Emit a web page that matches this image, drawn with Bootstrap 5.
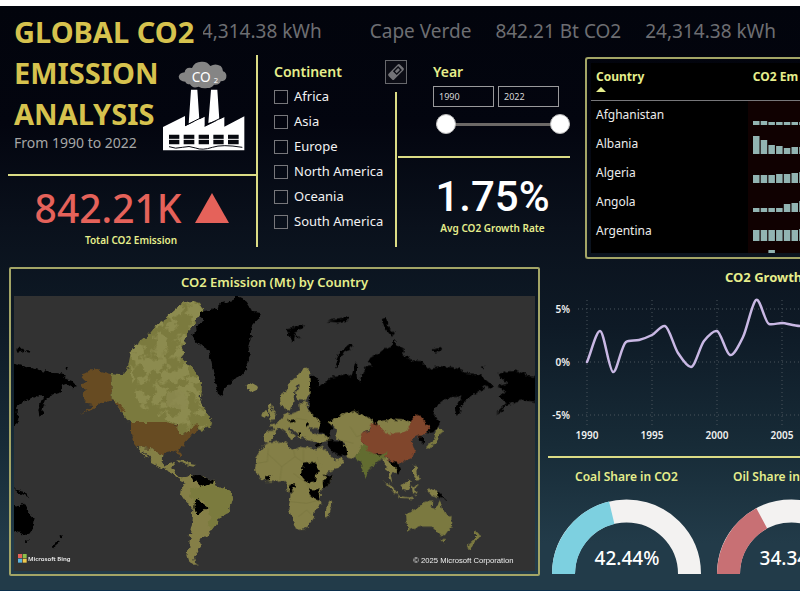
<!DOCTYPE html>
<html lang="en">
<head>
<meta charset="utf-8">
<meta name="viewport" content="width=device-width, initial-scale=1">
<title>Global CO2 Emission Analysis</title>
<link href="https://cdn.jsdelivr.net/npm/bootstrap@5.3.0/dist/css/bootstrap.min.css" rel="stylesheet">
<style>
  :root { --lime: #e6ee8c; --line: #dbdc85; --frame: #a3a566; }
  body { font-family: "Noto Sans", "Open Sans", sans-serif; background: #fff; color: #fff; font-size: 13px; line-height: 20px; overflow-x: hidden; }
  .dash { margin-top: 6px; padding-bottom: 14px; overflow: hidden; border-bottom: 1px solid #0b2f4c;
    background: linear-gradient(#02040c 0, #03050f 20%, #0a111c 38%, #0e1a26 55%, #172b37 75%, #223b49 92%, #223b49 100%); }
  .top-row { display: grid; grid-template-columns: 256fr 544fr; height: 253px; }
  .filters-row { display: grid; grid-template-columns: 314fr 230fr; }
  .bottom-row { display: grid; grid-template-columns: 531fr 252fr; column-gap: 8px; padding-left: 9px; margin-top: 8px; }
  .bottom-row > *, .top-row > *, .filters-row > * { min-width: 0; }
  .brand-block { padding: 5px 0 0 14px; height: 168px; }
  h1 { font-size: 29px; line-height: 41px; font-weight: 700; color: #d6c24e; margin: 0; flex: 1 1 0; min-width: 0; white-space: nowrap; }
  .factory { flex: none; margin: 50px 11px -17px 0; }
  .period { font-size: 14px; line-height: 18px; color: #a6a6a6; }
  .rule-h { height: 2px; background: var(--line); border: 0; opacity: 1; margin: 0; }
  .rule-v { width: 2px; background: var(--line); }
  .kpi { font-size: 39px; line-height: 48px; color: #e5625a; gap: 14px; font-weight: 500; padding-left: 8px; }
  .kpi-label { font-size: 10px; line-height: 16px; color: var(--lime); font-weight: 600; padding-left: 6px; }
  .ticker { height: 49px; margin-left: -53px; font-size: 19px; color: #6d6e72; padding-right: 24px; white-space: nowrap; }
  .ticker span { flex: none; }
  .heading { font-size: 14px; line-height: 20px; font-weight: 600; color: var(--lime); margin: 0; }
  .filter-panel { height: 192px; display: grid; grid-template-columns: 129fr 22px 163fr; }
  .filter-panel > * { min-width: 0; }
  .continents { padding: 7px 0 0 16px; border-left: 2px solid var(--line); }
  .continents label { line-height: 25px; height: 25px; white-space: nowrap; color: #f2f2f2; }
  .continents input { appearance: none; width: 14px; height: 14px; border: 1px solid #77777b; background: transparent; margin: 0 6px 0 0; flex: none; }
  .continents input:checked { background: var(--lime); }
  .checks { padding-top: 2px; }
  .divider-col { padding-top: 5px; }
  .clear-btn { width: 22px; height: 24px; padding: 0; border: 1px solid #67686c; background: #0b0c14; }
  .year-panel { padding-top: 7px; }
  .year-body { padding: 0 0 0 26px; }
  .year-box { width: 61px; height: 21px; font-size: 9px; line-height: 12px; color: #d8d8d8; background: transparent; border: 1px solid #99999b; padding: 0 5px; }
  .slider-pair { display: grid; margin-left: 29px; height: 22px; margin-top: 6px; }
  .slider-pair input { grid-area: 1 / 1; appearance: none; width: 100%; height: 22px; margin: 0; background: transparent; pointer-events: none; }
  .slider-pair input::-webkit-slider-runnable-track { height: 3px; background: transparent; }
  .slider-pair input:first-child::-webkit-slider-runnable-track { background: #6b6866; }
  .slider-pair input::-webkit-slider-thumb { appearance: none; width: 20px; height: 20px; border-radius: 50%; background: #fff; border: 1px solid #bbb; margin-top: -9px; pointer-events: auto; }
  .year-rule { margin: 21px 0 0 -9px; }
  .rate { font-family: Roboto, "Liberation Sans", sans-serif; font-size: 42px; line-height: 46px; font-weight: 500; }
  .table-frame { margin-left: 15px; margin-top: 2px; height: 202px; padding: 4px 0 4px 4px; border: 2px solid var(--frame); border-right: 0; border-radius: 3px 0 0 3px; overflow: hidden; }
  .table-view { height: 100%; overflow: hidden; background: #000; }
  .country-grid { table-layout: fixed; width: 100%; border-collapse: collapse; color: #ececec; font-size: 12px; }
  .country-grid th { height: 37px; vertical-align: top; padding: 4px 0 0 5px; color: var(--lime); font-weight: 700; border-bottom: 1px solid #77777a; white-space: nowrap; line-height: 20px; }
  .country-grid td { height: 29px; padding: 0 0 0 5px; line-height: 28px; }
  .country-grid td:last-child { background: #100101; }
  .country-grid svg { display: block; }
  .country-col { width: 75%; }
  .sort-mark { width: 0; border: 5px solid transparent; border-top: 0; border-bottom-color: var(--lime); }
  .map-frame { border: 2px solid var(--frame); border-radius: 2px; padding: 0 3px 3px; }
  .map-title { font-size: 13px; line-height: 27px; font-weight: 600; color: var(--lime); margin: 0; text-align: center; }
  .map-svg { display: block; width: 100%; height: auto; background: #323232; }
  .chart-title { font-size: 13px; line-height: 20px; font-weight: 700; color: var(--lime); margin: 0; padding-left: 177px; white-space: nowrap; }
  .chart-svg { display: block; width: 100%; height: auto; }
  .chart-svg text { font-size: 10px; font-weight: 600; fill: #f0f0f0; }
  .gauges { gap: 16px; padding: 9px 0 0 4px; overflow: hidden; }
  .gauge { width: 149px; flex: none; text-align: center; }
  .gauge h2 { font-size: 12px; line-height: 20px; font-weight: 600; color: var(--lime); margin: 0 0 12px; white-space: nowrap; }
  .gauge svg { display: block; }
  .gauge text { font-size: 19px; font-weight: 500; fill: #fff; }
</style>
<script src="https://cdn.jsdelivr.net/npm/bootstrap@5.3.0/dist/js/bootstrap.bundle.min.js"></script>
</head>
<body>
<main class="dash">
  <div class="top-row">
    <section>
      <div class="brand-block">
        <div class="d-flex align-items-start">
          <h1>GLOBAL CO2<br>EMISSION<br>ANALYSIS</h1>
          <svg class="factory" width="82" height="90" viewBox="0 0 246 270" aria-hidden="true">
            <g transform="translate(-490 -184)">
              <path fill="#858585" d="M537 231q3-12 18-13 2-17 22-13 8-20 30-19 16-1 25 13 15-9 31 0 7 6 7 16 12 4 10 18-2 12-17 12-3 12-20 10-7 10-20 10-14 3-26-4-18 7-26-7-11 0-14-8-18-1-20-15z"/>
              <text x="576" y="246" font-size="41" fill="#fff">CO</text><text x="642" y="249" font-size="23" fill="#fff">2</text>
              <path fill="#fff" d="M574 270h19l6 90-32 12zM634 270h19l6 90-33 10zM490 382l66-33v31l59-29v30l59-29v29l60-31v102H490z"/>
              <path stroke="#05070f" stroke-width="3" fill="none" d="M556 378l59-29M615 379l59-29M508 441q20 8 40 2t40 2 50-2 90 0"/>
              <g fill="#07090f"><path d="M508 405h31v29h-31zM552 405h32v29h-32zM597 405h31v29h-31zM641 405h31v29h-31zM685 405h32v29h-32z"/></g>
              <path stroke="#fff" stroke-width="3" d="M505 419H720"/>
            </g>
          </svg>
        </div>
        <div class="period">From 1990 to 2022</div>
      </div>
      <hr class="rule-h ms-2">
      <div class="text-center pt-2">
        <div class="kpi d-flex justify-content-center align-items-center"><span>842.21K</span>
          <svg width="34" height="30" viewBox="0 0 34 30" aria-hidden="true"><path fill="#e5625a" d="M17 0 34 30H0z"/></svg></div>
        <div class="kpi-label">Total CO2 Emission</div>
      </div>
    </section>

    <section>
      <div class="ticker d-flex align-items-center justify-content-end overflow-hidden">
        <span class="me-5">24,314.38 kWh</span><span class="me-4">Cape Verde</span><span class="me-4">842.21 Bt CO2</span><span>24,314.38 kWh</span>
      </div>
      <div class="filters-row">
        <div class="filter-panel">
          <div class="continents">
            <fieldset>
              <legend class="heading">Continent</legend>
              <div class="checks d-flex flex-column">
                <label class="d-flex align-items-center"><input type="checkbox">Africa</label>
                <label class="d-flex align-items-center"><input type="checkbox">Asia</label>
                <label class="d-flex align-items-center"><input type="checkbox">Europe</label>
                <label class="d-flex align-items-center"><input type="checkbox">North America</label>
                <label class="d-flex align-items-center"><input type="checkbox">Oceania</label>
                <label class="d-flex align-items-center"><input type="checkbox">South America</label>
              </div>
            </fieldset>
          </div>
          <div class="divider-col d-flex flex-column align-items-center">
            <button type="button" class="clear-btn d-flex align-items-center justify-content-center" aria-label="Clear selections">
              <svg width="18" height="18" viewBox="0 0 18 18" aria-hidden="true"><g transform="rotate(-45 9 9)"><rect x="1" y="5" width="16" height="8" rx="1.5" fill="#737377"/><rect x="8" y="7" width="6" height="4" fill="none" stroke="#0b0c14" stroke-width="1.4"/></g></svg>
            </button>
            <div class="rule-v flex-grow-1 mt-2"></div>
          </div>
          <div class="year-panel">
            <div class="year-body">
              <h2 class="heading">Year</h2>
              <div class="d-flex gap-1 mt-1">
                <input class="year-box" type="text" value="1990" aria-label="From year">
                <input class="year-box" type="text" value="2022" aria-label="To year">
              </div>
            </div>
            <div class="slider-pair">
              <input type="range" min="1990" max="2022" value="1990" aria-label="First year">
              <input type="range" min="1990" max="2022" value="2022" aria-label="Last year">
            </div>
            <hr class="rule-h year-rule">
            <div class="text-center ps-2 pt-3">
              <div class="rate">1.75%</div>
              <div class="kpi-label text-nowrap ps-0">Avg CO2 Growth Rate</div>
            </div>
          </div>
        </div>

        <div class="table-frame">
          <div class="table-view">
            <table class="country-grid">
              <thead><tr><th class="country-col">Country<div class="sort-mark"></div></th><th>CO2 Em</th></tr></thead>
              <tbody id="rows"></tbody>
            </table>
          </div>
        </div>
      </div>
    </section>
  </div>

  <div class="bottom-row">
    <section class="map-frame">
      <h2 class="map-title">CO2 Emission (Mt) by Country</h2>
      <svg class="map-svg" viewBox="42 108 1563 825" role="img" aria-label="World map of CO2 emission">
        <defs>
          <filter id="coast" x="-5%" y="-5%" width="110%" height="110%" color-interpolation-filters="sRGB"><feTurbulence type="fractalNoise" baseFrequency=".06" numOctaves="3" seed="4"/><feDisplacementMap in="SourceGraphic" scale="18" xChannelSelector="R" yChannelSelector="G"/></filter>
          <filter id="relief" x="0" y="0" width="100%" height="100%" color-interpolation-filters="sRGB"><feTurbulence type="fractalNoise" baseFrequency=".03" numOctaves="3" seed="9"/><feColorMatrix values="0 0 0 0 .55  0 0 0 0 .545  0 0 0 0 .31  9 0 0 0 -4"/><feComposite in2="SourceGraphic" operator="in"/></filter>
        </defs>
        <g filter="url(#coast)">
          <g fill="#000">
            <path d="M42 312 60 316 80 322 100 325 125 332 150 338 175 340 190 345 200 358 215 362 230 378 215 382 200 372 185 378 190 392 170 398 155 405 140 415 130 440 125 465 118 470 115 450 122 430 130 410 110 405 95 412 80 420 65 428 52 438 50 460 58 480 30 505 30 310zM48 266l22 0 4 8-22 4zM82 270l12 2-2 6-10-2zM196 320l8 2-4 6z"/>
            <path d="M600 155 615 152 630 150 640 145 655 148 660 130 680 125 700 120 710 108 725 115 740 125 750 140 755 155 780 160 772 180 755 200 752 230 745 260 752 285 740 310 742 325 725 345 705 355 690 370 675 385 665 410 655 405 645 370 640 340 635 310 625 270 610 260 580 235 572 228 590 215 588 195 610 185 600 175z"/>
          </g>
          <path fill="#7b7a3e" d="M334 342 360 345 378 338 385 315 392 280 405 258 430 240 450 220 470 195 485 182 492 188 500 170 525 148 550 128 580 124 600 128 610 148 600 165 590 180 580 200 565 210 560 235 545 262 552 280 545 295 560 310 580 325 590 345 606 370 605 395 600 420 612 445 630 465 628 480 640 492 628 500 605 512 580 505 560 520 540 525 530 495 393 490 380 478 365 458 345 425 334 418z"/>
          <path filter="url(#relief)" d="M390 345 392 280 405 258 430 240 450 220 470 195 485 182 492 188 500 170 525 148 550 128 580 124 600 128 610 148 600 165 590 180 580 200 565 210 560 235 545 262 552 280 545 295 560 310 580 325 590 345 606 370 605 395 600 420 612 445 630 465 628 480 605 505 560 510 500 480 420 440z"/>
          <path fill="#8c8950" opacity=".8" d="M500 400l25-10 30 10 8 25-10 25-35-5-20-20z"/>
          <path fill="#674b22" d="M245 352 255 338 280 325 300 333 334 342 334 418 345 425 358 428 372 450 365 455 350 435 335 420 310 422 295 428 290 440 270 450 245 466 268 445 278 432 262 428 250 412 245 400 262 390 243 380 245 372 262 368 250 358z"/>
          <path fill="#8a864c" d="M740 378 760 370 775 378 772 388 755 395 742 388z"/>
          <g transform="translate(0 480)">
            <path fill="#674b22" d="M393 6 500 6 520 12 535 22 538 42 552 42 570 32 585 15 592 22 585 38 575 45 565 60 552 75 535 88 545 105 540 112 532 95 515 93 500 96 487 108 475 98 455 88 430 84 412 80 400 65 393 45z"/>
            <path fill="#847f45" d="M412 80 430 84 455 88 475 98 487 108 485 125 495 138 508 132 522 128 518 140 510 145 525 152 530 165 545 172 560 170 562 176 548 182 530 172 515 158 495 148 478 142 462 132 455 118 440 102 432 90 427 90 444 114 438 118 418 86zM530 121 550 122 570 132 587 135 580 140 560 136 545 128 530 126z"/>
            <path fill="#857f47" d="M548 178 562 170 575 162 590 168 615 172 640 182 655 200 690 215 702 228 692 250 685 275 660 292 650 310 635 330 622 335 625 345 608 352 600 365 602 375 590 388 592 398 582 410 585 425 597 433 580 434 568 425 562 405 568 380 570 340 578 300 580 265 560 250 543 225 545 205 553 190z"/>
            <path fill="#7b7b3e" d="M575 205 600 200 640 190 655 200 690 215 702 228 692 250 685 275 660 292 650 310 635 328 620 315 632 292 622 262 605 240 585 242 570 230z"/>
            <path fill="#000" d="M572 166 600 165 610 172 630 178 642 185 638 195 618 192 600 200 590 190 580 182zM585 242 595 238 605 250 622 262 612 272 600 282 588 282 583 262zM30 255 60 262 68 248 78 265 88 280 104 300 100 325 85 345 65 342 30 328zM42 208 70 215 85 234 70 228 55 222zM155 378 175 360 179 368 160 384zM178 343 191 348 182 360zM78 360l8 0-4 8z"/>
          </g>
          <g transform="translate(720 0)">
            <path fill="#000" d="M208 345 225 350 240 362 240 375 225 378 245 375 275 350 320 342 335 350 345 305 352 312 350 350 358 368 368 335 380 320 395 318 385 300 410 285 430 268 450 262 460 240 470 252 495 268 490 285 510 298 545 305 560 325 600 318 640 322 680 338 720 345 740 362 760 378 750 385 725 375 735 390 705 400 690 410 668 430 660 455 650 468 645 448 665 410 630 412 605 425 585 440 578 460 590 470 600 490 585 515 565 520 530 495 460 495 400 500 320 500 275 500 270 535 255 528 240 515 235 480 215 462 205 445 210 420zM285 310 300 275 338 250 341 258 312 278 298 305 290 325zM140 205 165 200 180 192 195 200 182 210 165 215 185 238 165 225 160 250 150 230zM425 178 437 172 445 200 465 220 455 230 435 205zM578 268l22-4 4 8-22 6zM262 184l12-4 50-6 0 8-30 6zM725 320l8 0-2 8z"/>
            <path fill="#000" d="M775 345 800 335 830 332 860 345 900 355 900 428 850 420 830 425 800 435 780 455 765 462 800 428 775 405 800 395 772 380 800 370z"/>
            <path fill="#868248" d="M83 432 93 426 95 448 110 465 105 478 88 480 88 460zM66 466 78 452 85 463 75 475zM120 405 135 395 150 368 175 342 195 326 208 330 208 355 212 400 200 420 178 418 165 400 180 378 175 375 163 395 160 425 152 450 140 455 132 440 122 430z"/>
          </g>
          <g transform="translate(720 480)" fill="#847f47">
            <path d="M90 10 120 5 128-12 145-18 180-28 178-50 198-56 205-30 228-8 242 10 235 25 215 22 205 30 225 42 260 48 272 60 245 66 205 62 190 52 180 62 170 40 150 22 140 25 165 48 155 58 135 35 120 25 105 30 100 55 85 70 72 62 75 35 100 32 95 20z"/>
            <path d="M75 72 115 65 140 66 138 78 165 88 180 80 228 88 232 110 250 145 262 165 278 165 270 185 245 210 240 235 245 250 225 270 222 290 205 318 190 328 168 330 158 300 145 265 150 240 152 220 138 205 140 190 130 180 100 185 75 185 58 172 45 150 50 110 65 85zM255 268 272 245 277 252 265 290 255 292z"/>
            <path d="M222 90 245 82 262 95 285 120 300 115 312 125 300 142 255 160 240 130zM265 5 290-5 320-22 350-28 385-5 405 8 400 12 365 45 370 75 355 95 345 115 318 108 315 70 298 60 285 45 288 25zM410 5 450-2 500 2 520 12 500 40 450 45 420 30z"/>
            <path d="M430 105 445 122 470 140 475 158 455 160 460 190 450 180 440 140 428 125zM430 180 460 203 477 225 462 220zM475 224 522 232 520 238 475 231zM485 195 510 178 514 195 500 215 483 208zM516 198 534 196 522 208 532 222 518 220zM519 138 531 138 529 160 544 178 532 182 519 165zM562 208 594 212 594 232 575 225z"/>
            <path fill="#7b7940" d="M498 280 530 265 555 245 580 245 578 262 590 268 598 240 608 270 635 295 633 320 615 345 600 345 575 320 545 320 505 332 500 310zM604 356 619 358 612 371zM705 332 724 345 708 365 690 387 680 380 705 357zM594 22 610 35 592 50 592 68 560 87 554 78 580 65 588 45z"/>
            <path fill="#000" d="M190 128 225 125 240 150 228 165 225 185 200 188 182 165zM75 168 93 167 94 182 76 183zM250 165 278 162 270 185 250 205 248 185 260 178zM210 208 232 208 240 220 240 242 222 238 208 225zM148 195 166 192 160 210 150 222zM226 72 247 64 243 80 230 86zM262 60 300 62 315 75 320 105 300 108 280 98 268 80zM533 45 549 50 549 70 538 60zM592 212 617 237 592 232zM145 0l20-2 2 8-20 2zM175 38l8 0 0 10-8-2zM198 10l8 0 0 10-8 0z"/>
            <path fill="#80462c" d="M362 45 388 30 390 15 405 8 415 15 425 32 455 42 485 40 505 25 515 0 525-18 545-8 560 12 570 12 555 45 525 50 515 65 525 95 510 115 485 128 445 120 430 100 400 102 375 90 370 70z"/>
            <path fill="#626c30" d="M355 92 372 72 385 95 415 105 440 98 435 115 412 125 385 150 378 174 370 160 360 125 345 115z"/>
            <path fill="#000" d="M452 122 470 125 481 150 473 163 465 145zM412 100l12 0 0 5-12 0z"/>
          </g>
        </g>
        <g fill="none" stroke="#6f6b38" stroke-width="2" opacity=".5" transform="translate(720 480)">
          <path d="M85 85 82 125 50 130M82 100 125 140 165 110 190 128M125 140 120 180M165 110 160 88M160 160 200 190 210 210M150 245 200 250 240 240M175 290 200 270 220 290M190 88V128M160 10 170-5 200 0M330 20 350 50 365 45M300 60 340 70"/>
        </g>
        <g transform="translate(54 882)"><path fill="#e5625a" d="M0 0h12v12H0z"/><path fill="#8fbe4b" d="M14 0h12v12H14z"/><path fill="#5bb3dd" d="M0 14h12v12H0z"/><path fill="#f0c94c" d="M14 14h12v12H14z"/></g>
        <text x="84" y="903" font-size="18" font-weight="600" fill="#eee">Microsoft Bing</text>
        <text x="1240" y="909" font-size="23" fill="#eee" font-family="Liberation Sans, sans-serif">© 2025 Microsoft Corporation</text>
      </svg>
    </section>

    <section>
      <h2 class="chart-title">CO2 Growth</h2>
      <svg class="chart-svg" viewBox="0 0 252 169" role="img" aria-label="CO2 growth by year">
        <g stroke="#4a555c" stroke-dasharray="1 3"><path d="M30 22H252M30 75H252M30 128H252M39 13V140M104 13V140M169 13V140M234 13V140"/></g>
        <path fill="none" stroke="#c9b8e4" stroke-width="2.5" stroke-linejoin="round" stroke-linecap="round" d="M39 75C43 66 48 44 52 44S61 84 65 85 73 59 78 55C81 53 87 54 91 53S100 50 104 48 113 38 117 39 126 60 130 66 139 80 143 80 152 59 156 54 165 43 169 44 178 67 182 68 191 58 195 50 204 16 208 13 217 36 221 37 230 36 234 36 246 39 252 39"/>
        <g text-anchor="end"><text x="22" y="26">5%</text><text x="22" y="79">0%</text><text x="22" y="132">-5%</text></g>
        <g text-anchor="middle"><text x="39" y="152">1990</text><text x="104" y="152">1995</text><text x="169" y="152">2000</text><text x="234" y="152">2005</text></g>
      </svg>
      <hr class="rule-h">
      <div class="gauges d-flex">
        <div class="gauge"><h2>Coal Share in CO2</h2><svg width="149" height="75" viewBox="0 0 149 75" role="img" aria-label="Coal share 42.44%">
          <path d="M11.5 75A63 63 0 0 1 137.500 75" fill="none" stroke="#f3f2f1" stroke-width="23"/>
          <path d="M11.5 75A63 63 0 0 1 137.500 75" fill="none" stroke="#7dd0e0" stroke-width="23" pathLength="100" stroke-dasharray="42.44 100"/>
          <text x="75" y="66" text-anchor="middle">42.44%</text></svg></div>
        <div class="gauge"><h2 class="text-start ps-3">Oil Share in CO2</h2><svg width="149" height="75" viewBox="0 0 149 75" role="img" aria-label="Oil share 34.34%">
          <path d="M11.5 75A63 63 0 0 1 137.500 75" fill="none" stroke="#f3f2f1" stroke-width="23"/>
          <path d="M11.5 75A63 63 0 0 1 137.500 75" fill="none" stroke="#c87074" stroke-width="23" pathLength="100" stroke-dasharray="34.34 100"/>
          <text x="75" y="66" text-anchor="middle">34.34%</text></svg></div>
      </div>
    </section>
  </div>
</main>
<script>
  const data = [
    ["Afghanistan", [4, 4, 3, 3, 3, 3, 3]],
    ["Albania", [18, 14, 9, 8, 6, 7, 7]],
    ["Algeria", [8, 8, 8, 9, 9, 10, 11]],
    ["Angola", [4, 4, 4, 4, 8, 9, 11]],
    ["Argentina", [11, 11, 11, 11, 11, 11, 12]],
    ["Armenia", [6, 12, 20, 6, 5, 5, 5]]
  ];
  document.getElementById("rows").innerHTML = data.map(([name, v]) =>
    `<tr><td>${name}</td><td><svg width="54" height="24" aria-hidden="true">${v.map((h, i) =>
      `<rect x="${i * 7.7}" y="${22 - h}" width="6.5" height="${h}" fill="#92b4b2"/>`).join("")}</svg></td></tr>`).join("");
</script>
</body>
</html>
